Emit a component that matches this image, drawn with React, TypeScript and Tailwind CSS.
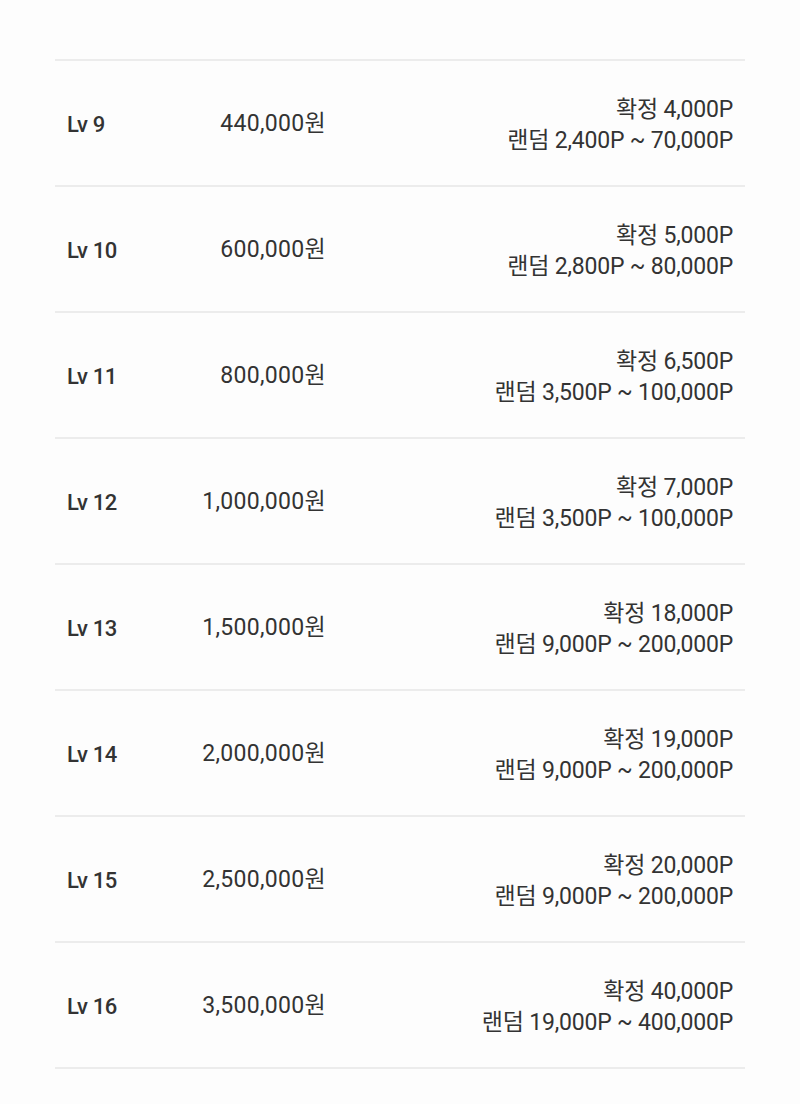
const rows = [
  { lv: "Lv 9", price: "440,000원", fixed: "확정 4,000P", random: "랜덤 2,400P ~ 70,000P" },
  { lv: "Lv 10", price: "600,000원", fixed: "확정 5,000P", random: "랜덤 2,800P ~ 80,000P" },
  { lv: "Lv 11", price: "800,000원", fixed: "확정 6,500P", random: "랜덤 3,500P ~ 100,000P" },
  { lv: "Lv 12", price: "1,000,000원", fixed: "확정 7,000P", random: "랜덤 3,500P ~ 100,000P" },
  { lv: "Lv 13", price: "1,500,000원", fixed: "확정 18,000P", random: "랜덤 9,000P ~ 200,000P" },
  { lv: "Lv 14", price: "2,000,000원", fixed: "확정 19,000P", random: "랜덤 9,000P ~ 200,000P" },
  { lv: "Lv 15", price: "2,500,000원", fixed: "확정 20,000P", random: "랜덤 9,000P ~ 200,000P" },
  { lv: "Lv 16", price: "3,500,000원", fixed: "확정 40,000P", random: "랜덤 19,000P ~ 400,000P" },
];

export default function App() {
  return (
    <div className="min-h-[1104px] bg-[#fdfdfd] pt-[59px] font-['Roboto','Noto_Sans_CJK_KR',sans-serif] text-[#333333]">
      <div className="mx-[55px] border-t-2 border-[#ececec]">
        {rows.map((r) => (
          <div key={r.lv} className="flex h-[126px] items-center border-b-2 border-[#ececec] px-3">
            <div className="w-[80px] pt-[3px] text-[22px] font-medium tracking-[-0.4px]">{r.lv}</div>
            <div className="w-[179px] pt-[3px] text-right text-[23px] tracking-[0.3px]">{r.price}</div>
            <div className="flex-1 pt-[3px] text-right text-[23px] leading-[31px] tracking-[-0.2px]">
              <div>{r.fixed}</div>
              <div>{r.random}</div>
            </div>
          </div>
        ))}
      </div>
    </div>
  );
}
